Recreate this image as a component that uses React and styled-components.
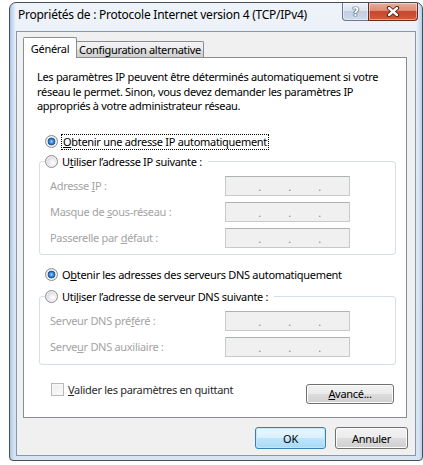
import React from "react";
import styled, { createGlobalStyle } from "styled-components";

const GlobalStyle = createGlobalStyle`
  html, body { margin: 0; padding: 0; background: #ffffff; }
  body {
    font-family: "Noto Sans", "Segoe UI", sans-serif;
    font-size: 11px;
    letter-spacing: -0.3px;
    color: #000;
  }
  * { box-sizing: border-box; }
`;

const Window = styled.div`
  width: 414px;
  height: 459px;
  margin: 2px 0 0 9px;
  border: 1px solid #4a4f57;
  border-radius: 7px 7px 4px 4px;
  background:
    linear-gradient(to right, #a9c4e3 0, #cddff2 3px, rgba(220,232,245,0) 6px),
    linear-gradient(to left, #b7cde8 0, #d4e3f3 3px, rgba(220,232,245,0) 6px),
    linear-gradient(180deg, #eef3f9 0%, #e2ebf6 40%, #d6e4f3 100%);
  padding: 0 6px 4px;
  display: flex;
  flex-direction: column;
`;

const TitleBar = styled.div`
  height: 28px;
  display: flex;
  align-items: flex-start;
`;

const Title = styled.div`
  flex: 1;
  margin-left: 2px;
  line-height: 24px;
  font-size: 12px;
  letter-spacing: -0.25px;
  color: #000;
  white-space: nowrap;
`;

const CaptionButtons = styled.div`
  display: flex;
  margin-right: -2px;
`;

const CaptionButton = styled.div`
  height: 18px;
  width: ${(p) => p.$w}px;
  display: flex;
  align-items: center;
  justify-content: center;
  border: 1px solid ${(p) => (p.$close ? "#6a2a1e" : "#6b7890")};
  border-top: none;
  border-radius: ${(p) => (p.$close ? "0 0 4px 0" : "0 0 0 4px")};
  margin-left: ${(p) => (p.$close ? "-1px" : "0")};
  background: ${(p) =>
    p.$close
      ? "linear-gradient(180deg, #e9ad9c 0%, #dc8b75 45%, #c7472f 50%, #d2593c 100%)"
      : "linear-gradient(180deg, #edf2f8 0%, #d9e3ef 45%, #c0cfe1 50%, #cddaea 100%)"};
  box-shadow: inset 0 0 0 1px rgba(255, 255, 255, 0.45);
`;

const HelpGlyph = styled.span`
  font-family: "DejaVu Sans", sans-serif;
  font-weight: bold;
  font-size: 12px;
  line-height: 1;
  color: #fff;
  text-shadow: 0 0 1px #2d3a4d, 0 0 1px #2d3a4d, 0 0 1px #2d3a4d;
`;

const Client = styled.div`
  height: 425px;
  border: 1px solid #8b97a7;
  background: #f0f0f0;
  padding: 5px 7px 6px 6px;
  display: flex;
  flex-direction: column;
`;

const TabStrip = styled.div`
  height: 20px;
  display: flex;
  align-items: flex-end;
`;

const Tab = styled.div`
  position: relative;
  z-index: ${(p) => (p.$active ? 2 : 1)};
  height: ${(p) => (p.$active ? 21 : 16)}px;
  margin-bottom: ${(p) => (p.$active ? -1 : 0)}px;
  margin-left: ${(p) => (p.$active ? 0 : -1)}px;
  width: ${(p) => p.$w}px;
  justify-content: center;
  border: 1px solid #898c95;
  border-bottom: none;
  border-radius: 2px 2px 0 0;
  background: ${(p) =>
    p.$active
      ? "#ffffff"
      : "linear-gradient(180deg, #f3f3f3 0%, #ebebeb 50%, #dddddd 50%, #cfcfcf 100%)"};
  display: flex;
  align-items: center;
  padding-top: ${(p) => (p.$active ? 1 : 0)}px;
  white-space: nowrap;
`;

const Panel = styled.div`
  width: 384px;
  height: 361px;
  border: 1px solid #898c95;
  background: #ffffff;
  padding: 12px 10px 0 13px;
  display: flex;
  flex-direction: column;
`;

const Description = styled.p`
  margin: 0;
  line-height: 14.5px;
  white-space: nowrap;
`;

const Option = styled.label`
  display: flex;
  align-items: center;
  height: 16px;
  gap: 4px;
  margin-top: ${(p) => p.$mt || 0}px;
  margin-left: ${(p) => p.$ml || 0}px;
  white-space: nowrap;
`;

const Radio = styled.span`
  width: 13px;
  height: 13px;
  flex-shrink: 0;
  border-radius: 50%;
  border: 1px solid #8c8c8c;
  background: ${(p) =>
    p.$checked
      ? "radial-gradient(circle at 50% 50%, #a6d7fb 0, #4b97de 1.6px, #1d5fae 3.2px, #2a5f9c 3.6px, #e9e9e9 4.2px, #d6d6d6 5.5px)"
      : "radial-gradient(circle at 60% 60%, #ffffff 0, #f1f1f1 2.5px, #dcdcdc 5.5px)"};
  box-shadow: inset 0 0 0 1px #f4f4f4;
`;

const Focus = styled.span`
  outline: 1px dotted #000;
  outline-offset: 0;
  padding: 0 1px;
  line-height: 14px;
`;

const Key = styled.span`
  text-decoration: underline;
  text-underline-offset: 1px;
`;

const Group = styled.fieldset`
  margin: ${(p) => p.$mt || 0}px 0 0 2px;
  width: 357px;
  padding: 6px 0 ${(p) => p.$pb || 6}px 10px;
  border: 1px solid #d5dfe5;
  border-radius: 3px;
  min-width: 0;
`;

const Legend = styled.legend`
  margin-left: -5px;
  padding: 0 6px 0 0;
  float: none;
`;

const Fields = styled.div`
  display: grid;
  grid-template-columns: 175px 125px;
  row-gap: 6px;
  align-items: center;
`;

const FieldLabel = styled.span`
  color: #a3a3a3;
  white-space: nowrap;
`;

const IPBox = styled.div`
  height: 20px;
  width: 125px;
  border: 1px solid #c7c9cb;
  border-top-color: #adb2b6;
  background: #f0f0f0;
  display: flex;
  align-items: center;
  padding-left: 32px;
  gap: 27px;
  color: #8a8a8a;
  line-height: 1;
  padding-top: 2px;
`;

const Dot = styled.span`
  width: 3px;
  text-align: center;
`;

const Footer = styled.div`
  margin-top: 19px;
  display: flex;
  justify-content: space-between;
  align-items: flex-start;
  padding-right: 2px;
`;

const CheckOption = styled.label`
  display: flex;
  align-items: center;
  gap: 4px;
  margin: -2px 0 0 14px;
  height: 16px;
  color: #2a2a2a;
  white-space: nowrap;
`;

const CheckBox = styled.span`
  width: 13px;
  height: 13px;
  border: 1px solid #b9b9b9;
  background: linear-gradient(135deg, #efefef, #fafafa);
  box-shadow: inset 0 0 0 1px #f7f7f7;
`;

const Button = styled.button`
  font: inherit;
  letter-spacing: inherit;
  color: #000;
  width: ${(p) => p.$w}px;
  height: ${(p) => p.$h || 22}px;
  padding: 0;
  border-radius: 3px;
  border: 1px solid ${(p) => (p.$default ? "#3c7fb1" : "#707070")};
  background: ${(p) =>
    p.$default
      ? "linear-gradient(180deg, #eaf6fd 0%, #d9f0fc 50%, #bee6fd 50%, #a7d9f5 100%)"
      : "linear-gradient(180deg, #f2f2f2 0%, #ebebeb 50%, #dddddd 50%, #cfcfcf 100%)"};
  box-shadow: inset 0 0 0 1px ${(p) => (p.$default ? "#c4e5f6" : "#fcfcfc")};
  display: flex;
  align-items: center;
  justify-content: center;
`;

const ButtonRow = styled.div`
  margin-top: 9px;
  display: flex;
  justify-content: flex-end;
  gap: 9px;
`;

function CloseGlyph() {
  return (
    <svg width="14" height="11" viewBox="0 0 14 11">
      <path d="M3 2 L11 9 M11 2 L3 9" stroke="#4b1a10" strokeWidth="4.2" strokeLinecap="round" />
      <path d="M3 2 L11 9 M11 2 L3 9" stroke="#ffffff" strokeWidth="2.4" strokeLinecap="round" />
    </svg>
  );
}

function IPField() {
  return (
    <IPBox>
      <Dot>.</Dot>
      <Dot>.</Dot>
      <Dot>.</Dot>
    </IPBox>
  );
}

export default function App() {
  return (
    <>
      <GlobalStyle />
      <Window>
        <TitleBar>
          <Title>Propriétés de : Protocole Internet version 4 (TCP/IPv4)</Title>
          <CaptionButtons>
            <CaptionButton $w={27}>
              <HelpGlyph>?</HelpGlyph>
            </CaptionButton>
            <CaptionButton $w={50} $close>
              <CloseGlyph />
            </CaptionButton>
          </CaptionButtons>
        </TitleBar>
        <Client>
          <TabStrip>
            <Tab $active $w={54}>Général</Tab>
            <Tab $w={128}>Configuration alternative</Tab>
          </TabStrip>
          <Panel>
            <Description>
              Les paramètres IP peuvent être déterminés automatiquement si votre
              <br />
              réseau le permet. Sinon, vous devez demander les paramètres IP
              <br />
              appropriés à votre administrateur réseau.
            </Description>

            <Option $mt={20} $ml={8}>
              <Radio $checked />
              <Focus>
                <Key>O</Key>btenir une adresse IP automatiquement
              </Focus>
            </Option>

            <Group $mt={4} $pb={6}>
              <Legend>
                <Option>
                  <Radio />
                  <span>
                    U<Key>t</Key>iliser l’adresse IP suivante :
                  </span>
                </Option>
              </Legend>
              <Fields>
                <FieldLabel>
                  Adresse <Key>I</Key>P :
                </FieldLabel>
                <IPField />
                <FieldLabel>
                  Masque de <Key>s</Key>ous-réseau :
                </FieldLabel>
                <IPField />
                <FieldLabel>
                  Passerelle par <Key>d</Key>éfaut :
                </FieldLabel>
                <IPField />
              </Fields>
            </Group>

            <Option $mt={12} $ml={8}>
              <Radio $checked />
              <span>
                O<Key>b</Key>tenir les adresses des serveurs DNS automatiquement
              </span>
            </Option>

            <Group $mt={6} $pb={7}>
              <Legend>
                <Option>
                  <Radio />
                  <span>
                    Uti<Key>l</Key>iser l’adresse de serveur DNS suivante :
                  </span>
                </Option>
              </Legend>
              <Fields>
                <FieldLabel>
                  Serveur DNS pré<Key>f</Key>éré :
                </FieldLabel>
                <IPField />
                <FieldLabel>
                  Serve<Key>u</Key>r DNS auxiliaire :
                </FieldLabel>
                <IPField />
              </Fields>
            </Group>

            <Footer>
              <CheckOption>
                <CheckBox />
                <span>
                  <Key>V</Key>alider les paramètres en quittant
                </span>
              </CheckOption>
              <Button $w={88} $h={20}>
                <span>
                  <Key>A</Key>vancé...
                </span>
              </Button>
            </Footer>
          </Panel>
          <ButtonRow>
            <Button $w={71} $default>
              OK
            </Button>
            <Button $w={73}>Annuler</Button>
          </ButtonRow>
        </Client>
      </Window>
    </>
  );
}
